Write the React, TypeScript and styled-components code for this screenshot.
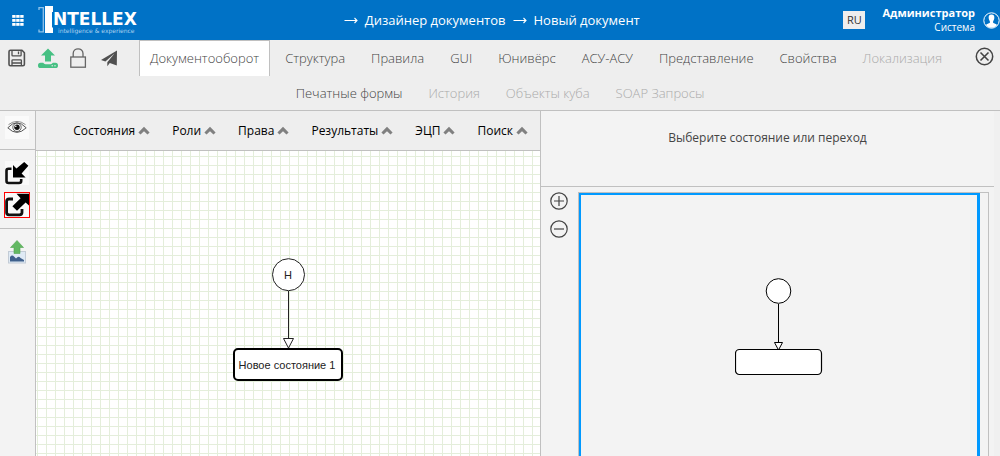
import React from "react";
import styled, { createGlobalStyle } from "styled-components";

const colors = {
  brand: "#0072c6",
  bar: "#eeeeee",
  panel: "#f3f3f3",
  line: "#c0c0c0",
  text: "#444444",
  muted: "#aaaaaa",
  grid: "#e4eedb",
  viewport: "#0099ff",
};

const GlobalStyle = createGlobalStyle`
  * { box-sizing: border-box; }
  body { margin: 0; font-family: "Open Sans", "Noto Sans", sans-serif; font-size: 13px; color: ${colors.text}; }
  button { font: inherit; color: inherit; background: none; border: 0; padding: 0; margin: 0; cursor: pointer; }
  a { color: inherit; text-decoration: none; }
  svg { display: block; }
`;

const Page = styled.div`
  display: flex;
  flex-direction: column;
  min-height: 100vh;
  background: ${colors.panel};
`;

const Header = styled.header`
  display: flex;
  align-items: center;
  height: 40px;
  background: ${colors.brand};
  color: #fff;
`;

const AppsButton = styled.button`
  margin: 0 14px 0 12px;
`;

const Logo = styled.a`
  display: flex;
  width: 106px;
`;

const LogoWords = styled.span`
  display: flex;
  flex-direction: column;
  padding-top: 6px;
  font-family: "DejaVu Sans", sans-serif;
  white-space: nowrap;
`;

const LogoName = styled.span`
  font-size: 17px;
  line-height: 15px;
  font-weight: 700;
`;

const LogoTagline = styled.span`
  padding-left: 5px;
  font-size: 6px;
  line-height: 7px;
  color: #a9d0ee;
`;

const Breadcrumbs = styled.nav`
  flex: 1;
  display: flex;
  justify-content: center;
  align-items: center;
  gap: 7px;
  padding-right: 4px;
  line-height: 20px;
`;

const LanguageButton = styled.button`
  width: 22px;
  height: 18px;
  background: ${colors.bar};
  color: #333;
  font-size: 11px;
  line-height: 18px;
`;

const User = styled.div`
  padding: 0 8px 0 17px;
  text-align: right;
`;

const UserName = styled.div`
  font-size: 11px;
  line-height: 14px;
  font-weight: 700;
`;

const UserRole = styled.div`
  font-size: 10px;
  line-height: 14px;
`;

const Toolbar = styled.div`
  background: ${colors.bar};
  border-bottom: 1px solid ${colors.line};
`;

const ToolbarRow = styled.div`
  display: flex;
  justify-content: center;
  height: 35px;
`;

const Tools = styled.div`
  display: flex;
  align-items: center;
  gap: 11px;
  padding: 0 4px 0 7px;
`;

const Tabs = styled.nav`
  flex: 1;
  display: flex;
  justify-content: center;
  gap: 4px;
`;

const Tab = styled.button<{ $active?: boolean }>`
  height: 36px;
  padding: 0 10px 2px;
  border: 1px solid ${(p) => (p.$active ? colors.line : "transparent")};
  border-bottom: 0;
  background: ${(p) => (p.$active ? "#fff" : "transparent")};
  font-weight: 300;
  line-height: 32px;
  white-space: nowrap;

  &:disabled { color: ${colors.muted}; cursor: default; }
`;

const CloseButton = styled.button`
  padding: 0 6px 2px 7px;
`;

const Workspace = styled.main`
  flex: 1;
  display: flex;
`;

const Sidebar = styled.aside`
  flex: 0 0 36px;
  border-right: 1px solid ${colors.line};
`;

const SideGroup = styled.div`
  display: flex;
  flex-direction: column;
  align-items: center;
  gap: 8px;
  padding: 5px 2px 10px 0;

  & + & { border-top: 1px solid ${colors.line}; padding: 11px 2px 11px 0; }
`;

const SideButton = styled.button<{ $selected?: boolean; $plain?: boolean }>`
  background: ${(p) => (p.$plain ? "none" : "#fafafa")};
  outline: ${(p) => (p.$selected ? "1px solid #f00" : "none")};
`;

const Editor = styled.section`
  flex: 504 1 0;
  display: flex;
  flex-direction: column;
`;

const MenuBar = styled.nav`
  display: flex;
  justify-content: flex-end;
  gap: 22px;
  height: 40px;
  padding: 0 12px;
  background: ${colors.bar};
  border-bottom: 1px solid ${colors.line};
`;

const MenuButton = styled.button`
  display: flex;
  align-items: center;
  gap: 3px;
  color: #000;
  font-size: 12px;
`;

const Canvas = styled.div`
  flex: 1;
  display: flex;
  justify-content: center;
  align-items: flex-start;
  padding-top: 107px;
  background-color: #fff;
  background-image: linear-gradient(to right, ${colors.grid} 1px, transparent 1px),
    linear-gradient(to bottom, ${colors.grid} 1px, transparent 1px);
  background-size: 9px 9px;
  background-position: 1px 5px;
`;

const Inspector = styled.section`
  flex: 453 1 0;
  display: flex;
  flex-direction: column;
  border-left: 1px solid ${colors.line};
  border-right: 6px solid #f0f0f0;
`;

const Hint = styled.p`
  height: 76px;
  margin: 0;
  padding-top: 17px;
  border-bottom: 1px solid ${colors.line};
  font-size: 12px;
  line-height: 20px;
  text-align: center;
`;

const Overview = styled.div`
  flex: 1;
  display: flex;
  padding: 5px 5px 0 9px;
`;

const ZoomButtons = styled.div`
  display: flex;
  flex-direction: column;
  gap: 10px;
  margin-right: 10px;
`;

const Minimap = styled.div`
  flex: 1;
  display: flex;
  padding-right: 8px;
  border: 1px solid ${colors.line};
  border-bottom: 0;
`;

const Viewport = styled.div`
  flex: 1;
  display: flex;
  justify-content: center;
  align-items: flex-start;
  padding-top: 83px;
  border: solid ${colors.viewport};
  border-width: 2px 3px 0 2px;
`;

const AppsIcon = () => (
  <svg width="12" height="11" viewBox="0 0 12 11" fill="#fff">
    {[0, 4, 8].map((x) => [0, 4, 8].map((y) => <rect key={`${x}-${y}`} x={x + 0.2} y={y} width="3.4" height="2.8" />))}
  </svg>
);

const LogoMark = () => (
  <svg width="15" height="28" viewBox="0 0 15 28" fill="none">
    <path d="M0.5 1.7H5.3V25.8H0.5M1 1V4M1 23.5V26.5" stroke="#8fc3ea" strokeWidth="1.3" />
    <path d="M7 0H16V6H14V21.5H15V27H7V21.5H9V6H7Z" fill="#fff" />
    <path d="M7 0H9.5V27H7Z" fill="#fff" />
  </svg>
);

const Arrow = () => (
  <svg width="14" height="8" viewBox="0 0 14 8" fill="none" stroke="#fff" strokeWidth="1.1">
    <path d="M0.5 4.5H13M10.5 2L13 4.5L10.5 7" />
  </svg>
);

const AvatarIcon = () => (
  <svg width="17" height="17" viewBox="0 0 17 17">
    <circle cx="8.5" cy="8.5" r="7.7" fill="none" stroke="#fff" />
    <path d="M8.5 2.5C10.8 2.5 11.6 4.2 11.3 6.3C11.1 8 10.4 8.8 10.1 9.4V10.8C11 11.8 13.4 11.8 14 13C12.6 14.8 10.8 15.7 8.5 15.7S4.4 14.8 3 13C3.6 11.8 6 11.8 6.9 10.8V9.4C6.6 8.8 5.9 8 5.7 6.3C5.4 4.2 6.2 2.5 8.5 2.5Z" fill="#fff" />
  </svg>
);

const SaveIcon = () => (
  <svg width="20" height="20" viewBox="0 0 20 20" fill="none" stroke="#505050" strokeWidth="1.6" strokeLinejoin="round">
    <path d="M3.5 2.3H15L17.4 4.7V16.2Q17.4 17.7 15.9 17.7H3.5Q2 17.7 2 16.2V3.8Q2 2.3 3.5 2.3Z" />
    <path d="M5 2.5V7.2Q5 7.9 5.7 7.9H13.4Q14.1 7.9 14.1 7.2V2.5M11.5 3.5V6.2" strokeWidth="1.3" />
    <path d="M5 17.5V12.6Q5 11.8 5.8 11.8H13.6Q14.4 11.8 14.4 12.6V17.5M5 15H14.4" strokeWidth="1.3" />
  </svg>
);

const UploadIcon = () => (
  <svg width="20" height="20" viewBox="0 0 20 20">
    <path d="M10 0.5L17 7.5H13V13.5H7V7.5H3Z" fill="#46c083" />
    <path d="M2.5 14.8H5.2Q6 16.2 7.5 16.2H12.5Q14 16.2 14.8 14.8H17.5Q20 14.8 20 17.4T17.5 20H2.5Q0 20 0 17.4T2.5 14.8Z" fill="#46c083" />
    <circle cx="14.2" cy="17.8" r="0.7" fill="#eee" />
    <circle cx="17" cy="17.8" r="0.7" fill="#eee" />
  </svg>
);

const LockIcon = () => (
  <svg width="20" height="20" viewBox="0 0 20 20" fill="none" stroke="#666" strokeWidth="1.3">
    <rect x="1.8" y="9" width="14.6" height="10.2" />
    <path d="M4.2 9V5.6C4.2 -0.8 14 -0.8 14 5.6V9" />
  </svg>
);

const SendIcon = () => (
  <svg width="20" height="20" viewBox="0 0 20 20" fill="#505050">
    <path d="M17 2.5L1 12L5.4 13.5L14.5 5.5L7.3 14.2V18.2L9.8 15L16.8 17.6Z" />
  </svg>
);

const CircleIcon = ({ path }: { path: string }) => (
  <svg width="18" height="18" viewBox="0 0 18 18" fill="none" stroke="#444">
    <circle cx="9" cy="9" r="8.2" strokeWidth="1.2" />
    <path d={path} strokeWidth="1.2" />
  </svg>
);

const CloseIcon = () => (
  <svg width="19" height="19" viewBox="0 0 19 19" fill="none" stroke="#444">
    <circle cx="9.5" cy="9.5" r="8.2" strokeWidth="1.5" />
    <path d="M5.5 5.5L13.5 13.5M13.5 5.5L5.5 13.5" strokeWidth="1.6" />
  </svg>
);

const ChevronIcon = () => (
  <svg width="12" height="10" viewBox="0 0 12 10" fill="#808080">
    <path d="M6 0.8L11.6 6.4L9.5 8.6L6 5.2L2.5 8.6L0.4 6.4Z" />
  </svg>
);

const EyeIcon = () => (
  <svg width="24" height="23" viewBox="0 0 24 23" fill="none" stroke="#444">
    <path d="M2.8 11.8Q11.8 1.8 21.2 11.8Q11.8 21 2.8 11.8Z" strokeWidth="0.9" />
    <path d="M3.5 8.6Q12 2.2 20.5 8.6" strokeWidth="0.6" />
    <circle cx="12" cy="11.3" r="4.2" strokeWidth="0.8" />
    <circle cx="12" cy="11.3" r="2.7" fill="#111" stroke="none" />
    <circle cx="10.8" cy="10.2" r="0.8" fill="#fff" stroke="none" />
  </svg>
);

const ImportIcon = () => (
  <svg width="24" height="24" viewBox="0 0 24 24">
    <path d="M6.5 7.8H3.5Q1.5 7.8 1.5 9.8V20Q1.5 22 3.5 22H14Q16.2 22 16.2 20V18" fill="none" stroke="#111" strokeWidth="2.6" />
    <path d="M8 4L11.5 7.4L19.2 1L23.4 4.8L16.6 12.4L20.6 16.5H8Z" fill="#000" />
  </svg>
);

const ExportIcon = () => (
  <svg width="24" height="24" viewBox="0 0 24 24">
    <path d="M8 6H4Q1.6 6 1.6 8.2V19.6Q1.6 21.8 4 21.8H14.5Q17 21.8 17 19.6V16" fill="none" stroke="#111" strokeWidth="2.8" />
    <path d="M11.5 0.8H24V12.6L20.6 9.6L12 17.8L7.4 13.2L15.6 5.2Z" fill="#000" />
  </svg>
);

const PictureIcon = () => (
  <svg width="18" height="24" viewBox="0 0 18 24">
    <rect x="0.5" y="11.5" width="17" height="11.5" fill="#dfeaf5" stroke="#c3ccd6" />
    <path d="M2 21.5V17Q4 14.5 6 16.5L8 18.5Q10.5 15.5 12.5 18L16 20V21.5Z" fill="#3f608c" />
    <path d="M9 0.5L15.5 7.5H12V13.5H6V7.5H2.5Z" fill="#62b862" stroke="#52a552" strokeWidth="0.6" />
  </svg>
);

const Diagram = () => (
  <svg width="110" height="124" viewBox="0 0 110 124" fill="#fff" stroke="#222">
    <path d="M55.5 33V81" />
    <path d="M50.5 80.5H60.5L55.5 90Z" />
    <circle cx="55.5" cy="16.7" r="16" />
    <rect x="1" y="91" width="108" height="31" rx="4" stroke="#000" strokeWidth="2" />
    <g fill="#222" stroke="none" textAnchor="middle" fontFamily='"Liberation Sans", sans-serif' fontSize="11">
      <text x="55" y="21">Н</text>
      <text x="54" y="111">Новое состояние 1</text>
    </g>
  </svg>
);

const DiagramPreview = () => (
  <svg width="88" height="98" viewBox="0 0 88 98" fill="#fff" stroke="#000">
    <path d="M43.5 26V72" />
    <path d="M39.5 64.5H47.5L43.5 72Z" />
    <circle cx="43.5" cy="13" r="12.3" />
    <rect x="0.5" y="71.5" width="86" height="25" rx="4" strokeWidth="1.2" />
  </svg>
);

const tabs = [
  { label: "Документооборот", active: true },
  { label: "Структура" },
  { label: "Правила" },
  { label: "GUI" },
  { label: "Юнивёрс" },
  { label: "АСУ-АСУ" },
  { label: "Представление" },
  { label: "Свойства" },
  { label: "Локализация", disabled: true },
];

const extraTabs = [
  { label: "Печатные формы" },
  { label: "История", disabled: true },
  { label: "Объекты куба", disabled: true },
  { label: "SOAP Запросы", disabled: true },
];

const menus = ["Состояния", "Роли", "Права", "Результаты", "ЭЦП", "Поиск"];

export default function App() {
  return (
    <Page>
      <GlobalStyle />
      <Header>
        <AppsButton aria-label="Приложения"><AppsIcon /></AppsButton>
        <Logo href="#">
          <LogoMark />
          <LogoWords>
            <LogoName>NTELLEX</LogoName>
            <LogoTagline>intelligence &amp; experience</LogoTagline>
          </LogoWords>
        </Logo>
        <Breadcrumbs>
          <Arrow />
          <a href="#">Дизайнер документов</a>
          <Arrow />
          <a href="#">Новый документ</a>
        </Breadcrumbs>
        <LanguageButton>RU</LanguageButton>
        <User>
          <UserName>Администратор</UserName>
          <UserRole>Система</UserRole>
        </User>
        <AvatarIcon />
      </Header>

      <Toolbar>
        <ToolbarRow>
          <Tools>
            <button aria-label="Сохранить"><SaveIcon /></button>
            <button aria-label="Загрузить"><UploadIcon /></button>
            <button aria-label="Заблокировать"><LockIcon /></button>
            <button aria-label="Отправить"><SendIcon /></button>
          </Tools>
          <Tabs>
            {tabs.map((t) => (
              <Tab key={t.label} $active={t.active} disabled={t.disabled}>{t.label}</Tab>
            ))}
          </Tabs>
          <CloseButton aria-label="Закрыть"><CloseIcon /></CloseButton>
        </ToolbarRow>
        <ToolbarRow>
          <Tabs>
            {extraTabs.map((t) => (
              <Tab key={t.label} disabled={t.disabled}>{t.label}</Tab>
            ))}
          </Tabs>
        </ToolbarRow>
      </Toolbar>

      <Workspace>
        <Sidebar>
          <SideGroup>
            <SideButton aria-label="Просмотр"><EyeIcon /></SideButton>
          </SideGroup>
          <SideGroup>
            <SideButton aria-label="Импорт"><ImportIcon /></SideButton>
            <SideButton aria-label="Экспорт" $selected><ExportIcon /></SideButton>
          </SideGroup>
          <SideGroup>
            <SideButton aria-label="Сохранить изображение" $plain><PictureIcon /></SideButton>
          </SideGroup>
        </Sidebar>

        <Editor>
          <MenuBar>
            {menus.map((m) => (
              <MenuButton key={m}>{m}<ChevronIcon /></MenuButton>
            ))}
          </MenuBar>
          <Canvas><Diagram /></Canvas>
        </Editor>

        <Inspector>
          <Hint>Выберите состояние или переход</Hint>
          <Overview>
            <ZoomButtons>
              <button aria-label="Увеличить"><CircleIcon path="M4 9H14M9 4V14" /></button>
              <button aria-label="Уменьшить"><CircleIcon path="M4 9H14" /></button>
            </ZoomButtons>
            <Minimap>
              <Viewport><DiagramPreview /></Viewport>
            </Minimap>
          </Overview>
        </Inspector>
      </Workspace>
    </Page>
  );
}
